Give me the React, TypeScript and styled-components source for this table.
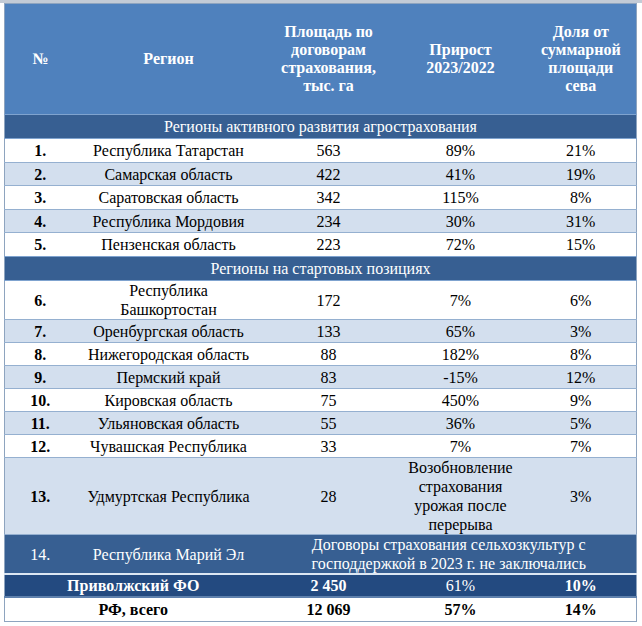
import React from "react";
import styled, { createGlobalStyle } from "styled-components";

const Global = createGlobalStyle`
  html, body { margin: 0; padding: 0; background: #ffffff; }
  body { font-family: "Liberation Serif", "Times New Roman", serif; }
`;

const Page = styled.div`
  width: 642px;
  height: 626px;
  overflow: hidden;
  background: #ffffff;
`;

const TopStrip = styled.div`
  height: 3px;
  background: #c3cbd6;
`;

const Table = styled.table`
  margin-left: 4px;
  width: 632px;
  table-layout: fixed;
  border-collapse: collapse;
  font-family: "Liberation Serif", "Times New Roman", serif;
  font-size: 16px;
  line-height: 19px;
  color: #000;
  border: 1px solid #8ea4bf;
`;

const HeadCell = styled.th`
  background: #4f81bd;
  color: #ffffff;
  font-weight: bold;
  font-size: 16px;
  line-height: 18px;
  text-align: center;
  vertical-align: middle;
  padding: 0 4px;
  height: 110px;
  border-bottom: 1px solid #7fa3cf;
`;

const SectionCell = styled.td`
  background: #375f92;
  color: #ffffff;
  text-align: center;
  vertical-align: middle;
  height: 23px;
  padding: 0;
  border-top: 1px solid #7fa3cf;
  border-bottom: 1px solid #7fa3cf;
`;

const Row = styled.tr<{ $shade?: boolean; $h: number }>`
  background: ${(p) => (p.$shade ? "#d3dfee" : "#ffffff")};
  height: ${(p) => p.$h}px;
  border-bottom: 1px solid #95b0d0;
`;

const Cell = styled.td<{ $bold?: boolean }>`
  text-align: center;
  vertical-align: middle;
  padding: 0 4px;
  font-weight: ${(p) => (p.$bold ? "bold" : "normal")};
`;

const DarkRow = styled.tr<{ $tone: "mid" | "deep" }>`
  background: ${(p) => (p.$tone === "mid" ? "#375f92" : "#234a80")};
  color: #ffffff;
  border-bottom: 2px solid ${(p) => (p.$tone === "mid" ? "#dce7f3" : "#5f81ad")};
`;

const TotalRow = styled.tr`
  background: #ffffff;
  height: 24px;
`;

type DataRow = {
  n: string;
  region: React.ReactNode;
  area: string;
  growth: React.ReactNode;
  share: string;
  h: number;
};

const group1: DataRow[] = [
  { n: "1.", region: "Республика Татарстан", area: "563", growth: "89%", share: "21%", h: 24 },
  { n: "2.", region: "Самарская область", area: "422", growth: "41%", share: "19%", h: 23 },
  { n: "3.", region: "Саратовская область", area: "342", growth: "115%", share: "8%", h: 24 },
  { n: "4.", region: "Республика Мордовия", area: "234", growth: "30%", share: "31%", h: 23 },
  { n: "5.", region: "Пензенская область", area: "223", growth: "72%", share: "15%", h: 24 },
];

const group2: DataRow[] = [
  { n: "6.", region: <>Республика<br />Башкортостан</>, area: "172", growth: "7%", share: "6%", h: 38 },
  { n: "7.", region: "Оренбургская область", area: "133", growth: "65%", share: "3%", h: 23 },
  { n: "8.", region: "Нижегородская область", area: "88", growth: "182%", share: "8%", h: 23 },
  { n: "9.", region: "Пермский край", area: "83", growth: "-15%", share: "12%", h: 23 },
  { n: "10.", region: "Кировская область", area: "75", growth: "450%", share: "9%", h: 23 },
  { n: "11.", region: "Ульяновская область", area: "55", growth: "36%", share: "5%", h: 23 },
  { n: "12.", region: "Чувашская Республика", area: "33", growth: "7%", share: "7%", h: 23 },
  {
    n: "13.",
    region: "Удмуртская Республика",
    area: "28",
    growth: <>Возобновление<br />страхования<br />урожая после<br />перерыва</>,
    share: "3%",
    h: 77,
  },
];

const renderRows = (rows: DataRow[]) =>
  rows.map((r, i) => (
    <Row key={r.n} $h={r.h} $shade={i % 2 === 1}>
      <Cell $bold>{r.n}</Cell>
      <Cell>{r.region}</Cell>
      <Cell>{r.area}</Cell>
      <Cell>{r.growth}</Cell>
      <Cell>{r.share}</Cell>
    </Row>
  ));

export default function App() {
  return (
    <Page>
      <Global />
      <TopStrip />
      <Table>
        <colgroup>
          <col style={{ width: 71 }} />
          <col style={{ width: 186 }} />
          <col style={{ width: 134 }} />
          <col style={{ width: 130 }} />
          <col style={{ width: 111 }} />
        </colgroup>
        <thead>
          <tr>
            <HeadCell>№</HeadCell>
            <HeadCell>Регион</HeadCell>
            <HeadCell>
              Площадь по
              <br />
              договорам
              <br />
              страхования,
              <br />
              тыс. га
            </HeadCell>
            <HeadCell>
              Прирост
              <br />
              2023/2022
            </HeadCell>
            <HeadCell>
              Доля от
              <br />
              суммарной
              <br />
              площади
              <br />
              сева
            </HeadCell>
          </tr>
        </thead>
        <tbody>
          <tr>
            <SectionCell colSpan={5}>Регионы активного развития агрострахования</SectionCell>
          </tr>
          {renderRows(group1)}
          <tr>
            <SectionCell colSpan={5}>Регионы на стартовых позициях</SectionCell>
          </tr>
          {renderRows(group2)}
          <DarkRow $tone="mid" style={{ height: 37 }}>
            <Cell>14.</Cell>
            <Cell>Республика Марий Эл</Cell>
            <Cell colSpan={3}>
              Договоры страхования сельхозкультур с<br />
              господдержкой в 2023 г. не заключались
            </Cell>
          </DarkRow>
          <DarkRow $tone="deep" style={{ height: 23 }}>
            <Cell colSpan={2} $bold>Приволжский ФО</Cell>
            <Cell $bold>2 450</Cell>
            <Cell>61%</Cell>
            <Cell $bold>10%</Cell>
          </DarkRow>
          <TotalRow>
            <Cell colSpan={2} $bold>РФ, всего</Cell>
            <Cell $bold>12 069</Cell>
            <Cell $bold>57%</Cell>
            <Cell $bold>14%</Cell>
          </TotalRow>
        </tbody>
      </Table>
    </Page>
  );
}
